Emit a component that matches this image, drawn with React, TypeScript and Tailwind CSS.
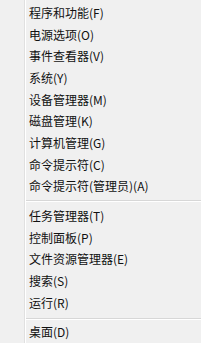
import React from "react";

const group1 = [
  "程序和功能(F)",
  "电源选项(O)",
  "事件查看器(V)",
  "系统(Y)",
  "设备管理器(M)",
  "磁盘管理(K)",
  "计算机管理(G)",
  "命令提示符(C)",
  "命令提示符(管理员)(A)",
];
const group2 = ["任务管理器(T)", "控制面板(P)", "文件资源管理器(E)", "搜索(S)", "运行(R)"];

function Row({ label }: { label: string }) {
  return (
    <div className="h-[21.75px] flex items-center pl-[3px] text-[12px] leading-none text-[#111]">
      {label}
    </div>
  );
}

function Sep({ top, bottom }: { top: string; bottom: string }) {
  return (
    <div className={`${top} ${bottom}`}>
      <div className="h-px bg-[#d7d7d7]" />
      <div className="h-px bg-white" />
    </div>
  );
}

export default function App() {
  return (
    <div
      className="w-[201px] h-[343px] overflow-hidden bg-[#f0f0f0] flex"
      style={{ fontFamily: '"Noto Sans CJK SC", "Noto Sans", sans-serif' }}
    >
      <div className="w-[25px] shrink-0 border-r border-[#e0e0e0]" />
      <div className="flex-1 border-l border-white flex flex-col pt-[2px]">
        {group1.map((l) => (
          <Row key={l} label={l} />
        ))}
        <div className="pt-[3px] pb-[3px]">
          <div className="h-px bg-[#d7d7d7]" />
          <div className="h-px bg-white" />
        </div>
        {group2.map((l) => (
          <Row key={l} label={l} />
        ))}
        <div className="pt-[5px] pb-[1px]">
          <div className="h-px bg-[#d7d7d7]" />
          <div className="h-px bg-white" />
        </div>
        <Row label="桌面(D)" />
      </div>
    </div>
  );
}
